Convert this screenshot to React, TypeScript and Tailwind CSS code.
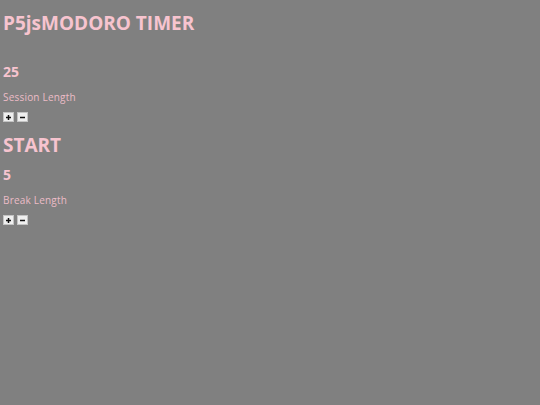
import React from "react";

const font = { fontFamily: '"Open Sans", "Liberation Sans", sans-serif' };

function Btns() {
  return (
    <div className="flex gap-[3px] h-[10px]">
      <button className="w-[11px] h-[10px] bg-[#efefef] border border-[#c4c4c4] flex items-center justify-center p-0">
        <svg width="5" height="5" viewBox="0 0 10 10"><path d="M3.5 0h3v3.5H10v3H6.5V10h-3V6.5H0v-3h3.5z" fill="#111" /></svg>
      </button>
      <button className="w-[11px] h-[10px] bg-[#efefef] border border-[#c4c4c4] flex items-center justify-center p-0">
        <svg width="5" height="5" viewBox="0 0 10 10"><path d="M0 3.5h10v3H0z" fill="#111" /></svg>
      </button>
    </div>
  );
}

export default function App() {
  return (
    <div className="w-[540px] h-[405px] bg-[#808080] text-[#f7c4cf] px-[3px] flex flex-col" style={font}>
      <h1 className="mt-[11px] text-[19px] leading-[24px] font-bold">P5jsMODORO TIMER</h1>
      <div className="mt-[27px] text-[14px] leading-[20px] font-bold">25</div>
      <div className="mt-[8px] text-[10px] leading-[14px] tracking-[0.2px] text-[#ecbcc7]">Session Length</div>
      <div className="mt-[8px]"><Btns /></div>
      <div className="mt-[11px] text-[19px] leading-[24px] font-bold">START</div>
      <div className="mt-[8px] text-[14px] leading-[20px] font-bold">5</div>
      <div className="mt-[8px] text-[10px] leading-[14px] tracking-[0.2px] text-[#ecbcc7]">Break Length</div>
      <div className="mt-[8px]"><Btns /></div>
    </div>
  );
}
